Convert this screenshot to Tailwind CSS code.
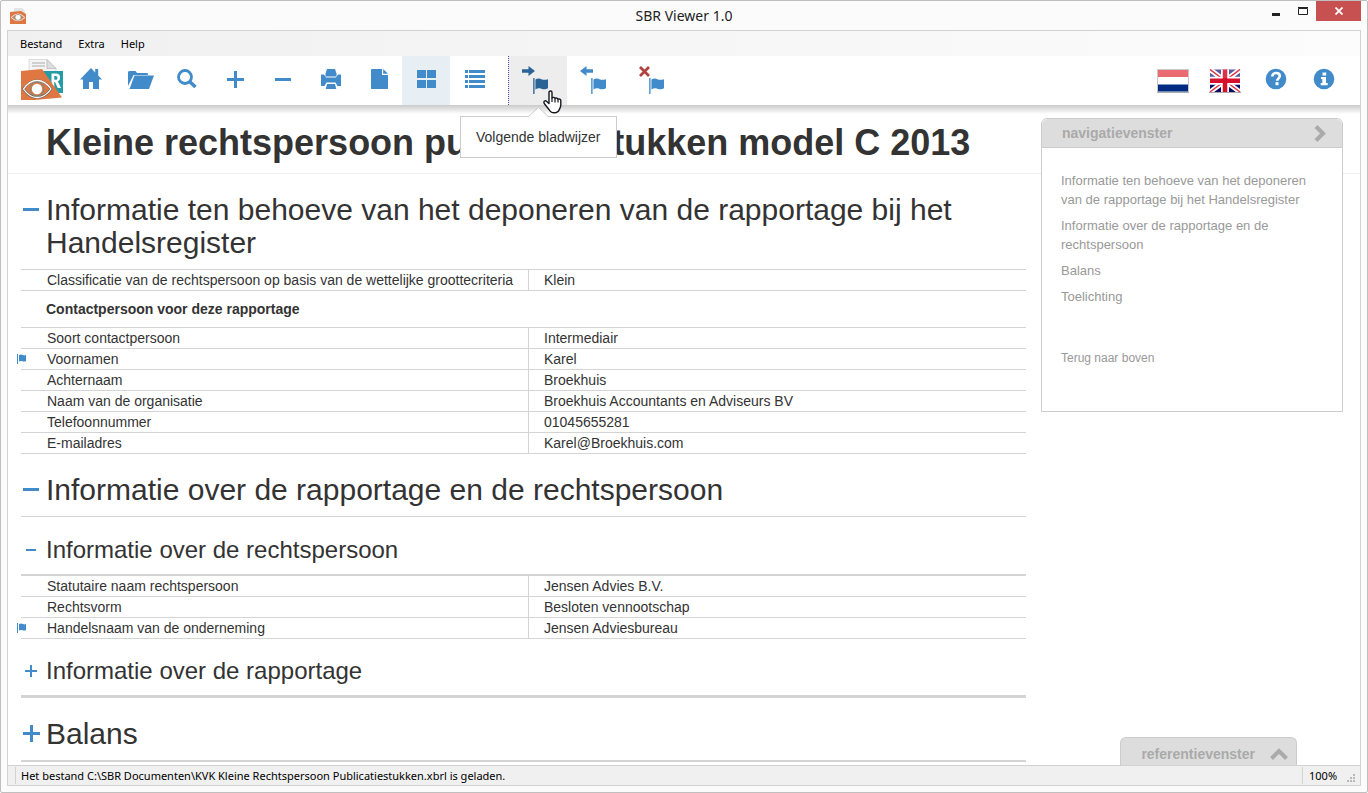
<!DOCTYPE html>
<html lang="nl">
<head>
<meta charset="utf-8">
<title>SBR Viewer 1.0</title>
<script src="https://cdn.jsdelivr.net/npm/@tailwindcss/browser@4"></script>
</head>
<body class="h-screen overflow-hidden bg-white font-['Liberation_Sans',Arial,sans-serif] text-sm text-[#333]">
<svg class="hidden" aria-hidden="true">
  <symbol id="flag" viewBox="0 0 16 17"><rect x="0" y="0" width="1.800" height="17" opacity=".8"/><path d="M2.600 1.600C4.500.2 7 .3 9 1.200s4 .9 7 0V11c-2.500 1.300-5 1-7.200.3S4.400 10.900 2.600 12.300z"/></symbol>
  <symbol id="arrow" viewBox="0 0 13 10"><path d="M0 3.200h6.500V0L13 5 6.500 10V6.800H0z"/></symbol>
  <symbol id="logo" viewBox="0 0 42 42">
    <path d="M8 .5h18l9 9V16H8z" fill="#f4f4f4" stroke="#d5d5d5" stroke-width=".8"/>
    <path d="M26 .5l9 9h-9z" fill="#ddd" stroke="#bbb" stroke-width=".8"/>
    <path d="M11 4h13M11 7h13" stroke="#c4c4c4" stroke-width="1.300"/>
    <path d="M20 12h22v22H30z" fill="#259ba5"/>
    <path d="M30.500 29V14.500h4.300c3 0 4.300 1.600 4.300 4 0 1.900-.8 3.200-2.300 3.800L40 29h-3.300l-2.600-6h-.8v6zM33.300 17v3.800h1.200c1.300 0 1.900-.7 1.900-1.900S35.800 17 34.600 17z" fill="#fff"/>
    <path d="M0 12l21-2 20 28.500L14 41H0z" fill="#df7743"/>
    <path d="M2.500 30C7 23.500 11 21.500 16 21.500S25.500 23.500 30 30C25.500 36.500 21 38.500 16 38.500S7 36.500 2.500 30z" fill="#df7743" stroke="#60605c" stroke-width="2.200"/>
    <path d="M2.500 30C7 23.500 11 21.500 16 21.500S25.500 23.500 30 30C25.500 36.500 21 38.500 16 38.500S7 36.500 2.500 30z" fill="none" stroke="#fff" stroke-width="1.300"/>
    <circle cx="16" cy="30" r="7" fill="none" stroke="#5b8f92" stroke-width=".9"/><circle cx="16" cy="30" r="5.200" fill="#fff"/>
  </symbol>
</svg>
<div class="relative flex h-full flex-col rounded-xs border border-[#bfbfbf] bg-[#fbfbfb] px-1.5 pb-1.5">
  <header class="relative flex h-[29px] shrink-0 items-center">
    <svg class="ml-[3px] size-4" viewBox="0 0 16 16"><path d="M4 0h8l3 3v2H4z" fill="#e3e3e3"/><path d="M0 4l11-1 5 3v10H0z" fill="#df7743"/><path d="M1 9.500Q8 2.500 15 9.500Q8 16 1 9.500z" fill="#c98a68" stroke="#efe5df" stroke-width="1"/><circle cx="8" cy="9.300" r="3" fill="#fff" stroke="#86796f" stroke-width=".6"/></svg>
    <h1 class="absolute inset-x-0 text-center font-['Noto_Sans',sans-serif] text-sm text-[#222]">SBR Viewer 1.0</h1>
    <div class="absolute top-0 right-0 flex h-5">
      <button aria-label="Minimaliseren" class="flex w-[27px] items-center justify-center"><svg class="mt-1.5 h-[3px] w-2"><rect width="8" height="3" fill="#222"/></svg></button>
      <button aria-label="Maximaliseren" class="flex w-[27px] items-center justify-center"><svg class="h-2 w-2.5"><path d="M.5 1.500h9v6h-9z M0 .5h10" fill="none" stroke="#222"/></svg></button>
      <button aria-label="Sluiten" class="flex w-[45px] items-center justify-center bg-[#c75050]"><svg class="size-2" viewBox="0 0 8 8"><path d="M.5.5l7 7M7.500.5l-7 7" stroke="#fff" stroke-width="1.800"/></svg></button>
    </div>
  </header>

  <div class="relative flex min-h-0 flex-1 flex-col border border-[#d2d2d2] bg-white">
    <nav aria-label="Menu" class="flex h-[25px] shrink-0 items-center gap-4 bg-linear-to-r from-[#f0f0f0] to-[#fcfcfc] pl-3 font-['Noto_Sans',sans-serif] text-[11px] text-black">
      <button>Bestand</button><button>Extra</button><button>Help</button>
    </nav>

    <div role="toolbar" aria-label="Werkbalk" class="relative z-10 flex h-[49px] shrink-0 bg-white pl-[13px] text-[#428bca]">
      <div class="absolute inset-x-0 top-full h-[9px] bg-linear-to-b from-[#cacaca] to-transparent"></div>
      <svg class="mt-[3px] mr-1 size-[42px]"><use href="#logo"/></svg>
      <button aria-label="Start" class="flex w-12 items-center justify-center pb-1"><svg class="size-[22px]" fill="currentColor" viewBox="0 0 22 22"><path d="M11 0L0 11.500h3V21h6v-7h4v7h6v-9.500h3L18.200 7.500V1h-3v3.500z"/></svg></button>
      <button aria-label="Openen" class="flex w-12 items-center justify-center pb-0.5 pl-1"><svg class="h-[18px] w-[26px]" fill="currentColor" viewBox="0 0 26 18"><path d="M0 15V1.500C0 .7.700 0 1.500 0h6L9 2h9.500c1 0 1.500.6 1.500 1.500V4H5.500z"/><path d="M6.500 4.500H26l-5 13.500H1.500z"/></svg></button>
      <button aria-label="Zoeken" class="flex w-12 items-center justify-center pb-1"><svg class="size-5" viewBox="0 0 20 20" fill="none" stroke="currentColor"><circle cx="8" cy="8" r="6.500" stroke-width="2.800"/><path d="M12.500 12.500L18.500 18" stroke-width="3.600"/></svg></button>
      <button aria-label="Inzoomen" class="flex w-12 items-center justify-center pb-1"><svg class="mt-0.5 size-[17px]"><path d="M7 0h3v7h7v3h-7v7H7v-7H0V7h7z" fill="currentColor"/></svg></button>
      <button aria-label="Uitzoomen" class="flex w-12 items-center justify-center pb-0.5"><svg class="h-[3px] w-4"><rect width="16" height="3" fill="currentColor"/></svg></button>
      <button aria-label="Afdrukken" class="flex w-12 items-center justify-center pb-1"><svg class="size-5" fill="currentColor" viewBox="0 0 20 20"><path d="M6 0h8l1.500 4.500v3h-11v-3zM0 5.500h2c1 0 1.500.5 2 1.500l1 1.500h10L16 7c.5-1 1-1.500 2-1.500h2V17h-3.500L14.500 13.500h-9L3.500 17H0zM0 8.500h20v5H0zM6 15h8l1.300 5H4.700z"/></svg></button>
      <button aria-label="Document" class="flex w-12 items-center justify-center pb-1"><svg class="h-5 w-[17px]" fill="currentColor" viewBox="0 0 17 20"><path d="M1 0h10v6h6v13.500c0 .3-.2.5-.5.5H.5c-.3 0-.5-.2-.5-.5V.5z"/><path d="M12.200 0L17 4.800h-4.800z"/></svg></button>
      <button aria-label="Blokweergave" aria-pressed="true" class="flex w-12 -translate-x-px items-center justify-center bg-[#e7eef4] pb-1"><svg class="h-[18px] w-[19px]" fill="currentColor"><path d="M0 0h9v8H0zM10 0h9v8h-9zM0 10h9v8H0zM10 10h9v8h-9z"/></svg></button>
      <button aria-label="Lijstweergave" class="flex w-12 items-center justify-center pb-1"><svg class="h-[18px] w-5" fill="currentColor"><path d="M0 0h3v3H0zM4 0h16v3H4zM0 5h3v3H0zM4 5h16v3H4zM0 10h3v3H0zM4 10h16v3H4zM0 15h3v3H0zM4 15h16v3H4z"/></svg></button>
      <button aria-describedby="tip" aria-label="Volgende bladwijzer" class="relative ml-[9px] flex w-[59px] border-l border-dotted border-[#5a4fb0] bg-[#ededed] pt-2.5 pl-[13px] text-[#2a6496]">
        <svg class="h-2.5 w-[13px]" fill="currentColor"><use href="#arrow"/></svg>
        <svg class="mt-3 -ml-0.5 h-4 w-[15px]" fill="currentColor"><use href="#flag"/></svg>
        <span id="tip" role="tooltip" class="absolute top-[60px] -left-[49px] border border-[#ccc] bg-white px-[15px] py-[10px] text-sm leading-5 whitespace-nowrap text-[#333]">Volgende bladwijzer
          <svg class="absolute -top-2.5 left-[67px] h-[11px] w-[21px]"><path d="M0 10.500L10.500.5 21 10.500V11H0z" fill="#fff"/><path d="M0 10L10.500.5 21 10" fill="none" stroke="#ccc"/></svg>
        </span>
        <svg class="absolute top-[34px] left-[34px] z-20 h-6 w-[19px]" viewBox="0 0 19 24"><path d="M6 13.500V2.500C6 .5 9 .5 9 2.500V8c.6-1 2.900-.8 3 .5.800-.8 2.800-.5 3 .8 1-.6 2.800-.2 2.800 1.500V15c0 2-.8 3-1.500 4.500-.7 2-2.300 3.300-5 3.300-3.300 0-4.300-1.300-5.300-3.300L2 14.500c-1.200-1.500-1.600-2.500-.7-3.300 1-.8 2.200-.2 3 .8z" fill="#fff" stroke="#15151f" stroke-width="1.400" stroke-linejoin="round"/><path d="M9 8v4M12 8.500v4M15 9.500v3" stroke="#15151f" stroke-width="1.200"/></svg>
      </button>
      <button aria-label="Vorige bladwijzer" class="flex w-[58px] pt-2.5 pl-[13px]">
        <svg class="h-2.5 w-[13px] rotate-180" fill="currentColor"><use href="#arrow"/></svg>
        <svg class="mt-3 -ml-0.5 h-4 w-[15px]" fill="currentColor"><use href="#flag"/></svg>
      </button>
      <button aria-label="Bladwijzer verwijderen" class="flex w-[58px] pt-2.5 pl-[13px]">
        <svg class="h-[11px] w-[13px]" viewBox="0 0 12 11"><path d="M1.500 1l9 9M10.500 1l-9 9" stroke="#b04242" stroke-width="2.800"/></svg>
        <svg class="mt-3 -ml-0.5 h-4 w-[15px]" fill="currentColor"><use href="#flag"/></svg>
      </button>
      <div class="ml-auto flex items-center gap-5 pr-[25px] pb-1">
        <button aria-label="Nederlands" class="mt-1"><svg class="h-6 w-8" viewBox="0 0 32 24"><rect x=".5" y=".5" width="31" height="22.500" fill="#fff" stroke="#c9c9c9"/><path d="M1 1h30v7H1z" fill="#ea6b72"/><path d="M1 15.500h30v7H1z" fill="#002b80"/><path d="M0 23.500h32" stroke="#aaa"/></svg></button>
        <button aria-label="English" class="mt-1"><svg class="h-6 w-8" viewBox="0 0 32 24"><rect x="1" y=".5" width="30" height="11" fill="#5a5aa0"/><rect x="1" y="11" width="30" height="12" fill="#0c0c66"/><path d="M1 .5l30 22.500M31 .5L1 23" stroke="#fff" stroke-width="5"/><path d="M1 .5l30 22.500M31 .5L1 23" stroke="#dc3040" stroke-width="1.500"/><path d="M16 .5V23M1 11.800h30" stroke="#fff" stroke-width="8"/><path d="M16 .5V23M1 11.800h30" stroke="#d50f2c" stroke-width="4.500"/><path d="M12.500.5h7V9h-7z" fill="#fff" opacity=".15"/><path d="M0 23.500h32" stroke="#aaa"/></svg></button>
        <button aria-label="Hulp" class="ml-1"><svg class="size-[22px]" viewBox="0 0 22 22"><circle cx="11" cy="11" r="10.300" fill="currentColor"/><path d="M7.300 8.500C7.300 6.200 9 5 11.100 5s3.700 1.200 3.700 3.100c0 2.100-2.600 2.500-2.600 4.700" fill="none" stroke="#fff" stroke-width="2.600"/><rect x="10.500" y="14.200" width="3" height="3" fill="#fff"/></svg></button>
        <button aria-label="Info" class="ml-1.5"><svg class="size-[22px]" viewBox="0 0 22 22"><circle cx="11" cy="11" r="10.300" fill="currentColor"/><path d="M9.500 4.500h3.700v3H9.500zM8 9h5v6h1.700v2.200H7.700V15h1.600v-4H8z" fill="#fff"/></svg></button>
      </div>
    </div>

    <main class="min-h-0 flex-1 overflow-hidden">
      <div class="border-b border-[#eee] px-[38px] pt-[18px] pb-2.5"><h1 class="text-4xl font-bold">Kleine rechtspersoon publicatiestukken model C 2013</h1></div>
      <div class="mr-[334px] ml-[13px]">
        <section>
          <h2 class="mt-[19px] flex pb-2.5 text-3xl leading-[33px]"><button aria-label="Inklappen" class="flex h-[33px] w-[25px] shrink-0 items-center pl-0.5"><svg class="h-[3px] w-4"><rect width="16" height="3" fill="#428bca"/></svg></button><span>Informatie ten behoeve van het deponeren van de rapportage bij het Handelsregister</span></h2>
          <table class="w-full table-fixed border-separate border-spacing-0 border-t border-[#d4d4d4] text-sm leading-5">
            <tr><th scope="row" class="w-[508px] border-r border-b border-[#d4d4d4] p-0 pl-[26px] text-left font-normal">Classificatie van de rechtspersoon op basis van de wettelijke groottecriteria</th><td class="border-b border-[#d4d4d4] p-0 pl-[15px]">Klein</td></tr>
          </table>
          <h4 class="py-2 pl-[25px] text-sm leading-5 font-bold">Contactpersoon voor deze rapportage</h4>
          <table class="w-full table-fixed border-separate border-spacing-0 border-t border-[#d4d4d4] text-sm leading-5">
            <tr><th scope="row" class="w-[508px] border-r border-b border-[#d4d4d4] p-0 pl-[26px] text-left font-normal">Soort contactpersoon</th><td class="border-b border-[#d4d4d4] p-0 pl-[15px]">Intermediair</td></tr>
            <tr><th scope="row" class="relative border-r border-b border-[#d4d4d4] p-0 pl-[26px] text-left font-normal"><svg class="absolute top-[5px] -left-1 h-2.5 w-[9px]" fill="#428bca" viewBox="0 0 9 10"><path d="M0 0h1v10H0zM2 1q2-1 4 0t3-.5V7q-1.500 1-3.500.3T2 7.500z"/></svg>Voornamen</th><td class="border-b border-[#d4d4d4] p-0 pl-[15px]">Karel</td></tr>
            <tr><th scope="row" class="border-r border-b border-[#d4d4d4] p-0 pl-[26px] text-left font-normal">Achternaam</th><td class="border-b border-[#d4d4d4] p-0 pl-[15px]">Broekhuis</td></tr>
            <tr><th scope="row" class="border-r border-b border-[#d4d4d4] p-0 pl-[26px] text-left font-normal">Naam van de organisatie</th><td class="border-b border-[#d4d4d4] p-0 pl-[15px]">Broekhuis Accountants en Adviseurs BV</td></tr>
            <tr><th scope="row" class="border-r border-b border-[#d4d4d4] p-0 pl-[26px] text-left font-normal">Telefoonnummer</th><td class="border-b border-[#d4d4d4] p-0 pl-[15px]">01045655281</td></tr>
            <tr><th scope="row" class="border-r border-b border-[#d4d4d4] p-0 pl-[26px] text-left font-normal">E-mailadres</th><td class="border-b border-[#d4d4d4] p-0 pl-[15px]">Karel@Broekhuis.com</td></tr>
          </table>
        </section>
        <section>
          <h2 class="mt-[19px] flex border-b border-[#d4d4d4] pb-2.5 text-3xl leading-[33px]"><button aria-label="Inklappen" class="flex h-[33px] w-[25px] shrink-0 items-center pl-0.5"><svg class="h-[3px] w-4"><rect width="16" height="3" fill="#428bca"/></svg></button><span>Informatie over de rapportage en de rechtspersoon</span></h2>
          <h3 class="mt-5 flex border-b-2 border-[#d4d4d4] pb-[11px] text-2xl leading-[26px]"><button aria-label="Inklappen" class="flex w-[25px] shrink-0 items-center pl-[5px]"><svg class="h-0.5 w-2.5"><rect width="10" height="2" fill="#428bca"/></svg></button><span>Informatie over de rechtspersoon</span></h3>
          <table class="w-full table-fixed border-separate border-spacing-0 text-sm leading-5">
            <tr><th scope="row" class="w-[508px] border-r border-b border-[#d4d4d4] p-0 pl-[26px] text-left font-normal">Statutaire naam rechtspersoon</th><td class="border-b border-[#d4d4d4] p-0 pl-[15px]">Jensen Advies B.V.</td></tr>
            <tr><th scope="row" class="border-r border-b border-[#d4d4d4] p-0 pl-[26px] text-left font-normal">Rechtsvorm</th><td class="border-b border-[#d4d4d4] p-0 pl-[15px]">Besloten vennootschap</td></tr>
            <tr><th scope="row" class="relative border-r border-b border-[#d4d4d4] p-0 pl-[26px] text-left font-normal"><svg class="absolute top-[5px] -left-1 h-2.5 w-[9px]" fill="#428bca" viewBox="0 0 9 10"><path d="M0 0h1v10H0zM2 1q2-1 4 0t3-.5V7q-1.500 1-3.500.3T2 7.500z"/></svg>Handelsnaam van de onderneming</th><td class="border-b border-[#d4d4d4] p-0 pl-[15px]">Jensen Adviesbureau</td></tr>
          </table>
          <h3 class="mt-[19px] flex border-b-3 border-[#d4d4d4] pb-[11px] text-2xl leading-[26px]"><button aria-label="Uitklappen" class="flex w-[25px] shrink-0 items-center pl-1"><svg class="size-3" fill="#428bca"><path d="M5 0h2v5h5v2H7v5H5V7H0V5h5z"/></svg></button><span>Informatie over de rapportage</span></h3>
        </section>
        <section>
          <h2 class="mt-[19px] flex border-b-2 border-[#d4d4d4] pb-2.5 text-3xl leading-[33px]"><button aria-label="Uitklappen" class="flex h-[33px] w-[25px] shrink-0 items-center pl-0.5"><svg class="size-[17px]" fill="#428bca"><path d="M7 0h3v7h7v3h-7v7H7v-7H0V7h7z"/></svg></button><span>Balans</span></h2>
        </section>
      </div>
    </main>

    <aside aria-label="navigatievenster" class="absolute top-[87px] right-[17px] z-10 w-[302px] rounded-t-md border border-[#ccc] bg-white text-[#999]">
      <button class="flex h-[29px] w-full items-center justify-between rounded-t-md border-b border-[#ccc] bg-[#ddd] pr-4 pl-5 text-sm font-bold text-[#aaa]">navigatievenster<svg class="h-[17px] w-3" viewBox="0 0 12 17"><path d="M2 1.500l7 7-7 7" fill="none" stroke="#aaa" stroke-width="4"/></svg></button>
      <nav class="flex flex-col gap-[7px] px-[19px] pt-[23px] pb-[43px] text-[13px] leading-[19px]">
        <a href="#">Informatie ten behoeve van het deponeren van de rapportage bij het Handelsregister</a>
        <a href="#">Informatie over de rapportage en de rechtspersoon</a>
        <a href="#">Balans</a>
        <a href="#">Toelichting</a>
        <a href="#" class="mt-9 text-xs leading-[19px]">Terug naar boven</a>
      </nav>
    </aside>

    <button class="absolute right-[63px] bottom-5 z-10 flex h-[28px] items-center gap-[15px] rounded-t-md border border-b-0 border-[#ccc] bg-[#ddd] pt-1 pr-2 pl-5 text-sm font-bold text-[#aaa]">referentievenster<svg class="h-3 w-[18px]" viewBox="0 0 18 12"><path d="M1.500 10.500L9 3l7.500 7.500" fill="none" stroke="#aaa" stroke-width="4"/></svg></button>

    <footer class="flex h-5 shrink-0 border-t border-[#d2d2d2] bg-[#f0f0f0] font-['Noto_Sans',sans-serif] text-[11px] leading-[19px] text-black">
      <p class="my-px ml-[7px] flex-1 border-l border-[#d2d2d2] pl-[5px] leading-[17px]">Het bestand C:\SBR Documenten\KVK Kleine Rechtspersoon Publicatiestukken.xbrl is geladen.</p>
      <p class="my-px w-[45px] border-l border-[#d2d2d2] pl-1.5 leading-[17px]">100%</p>
      <svg class="mt-2 mr-[5px] h-2 w-2" fill="#b8b8b8"><path d="M6 0h2v2H6zM3 3h2v2H3zM6 3h2v2H6zM0 6h2v2H0zM3 6h2v2H3zM6 6h2v2H6z"/></svg>
    </footer>
  </div>
</div>
</body>
</html>
